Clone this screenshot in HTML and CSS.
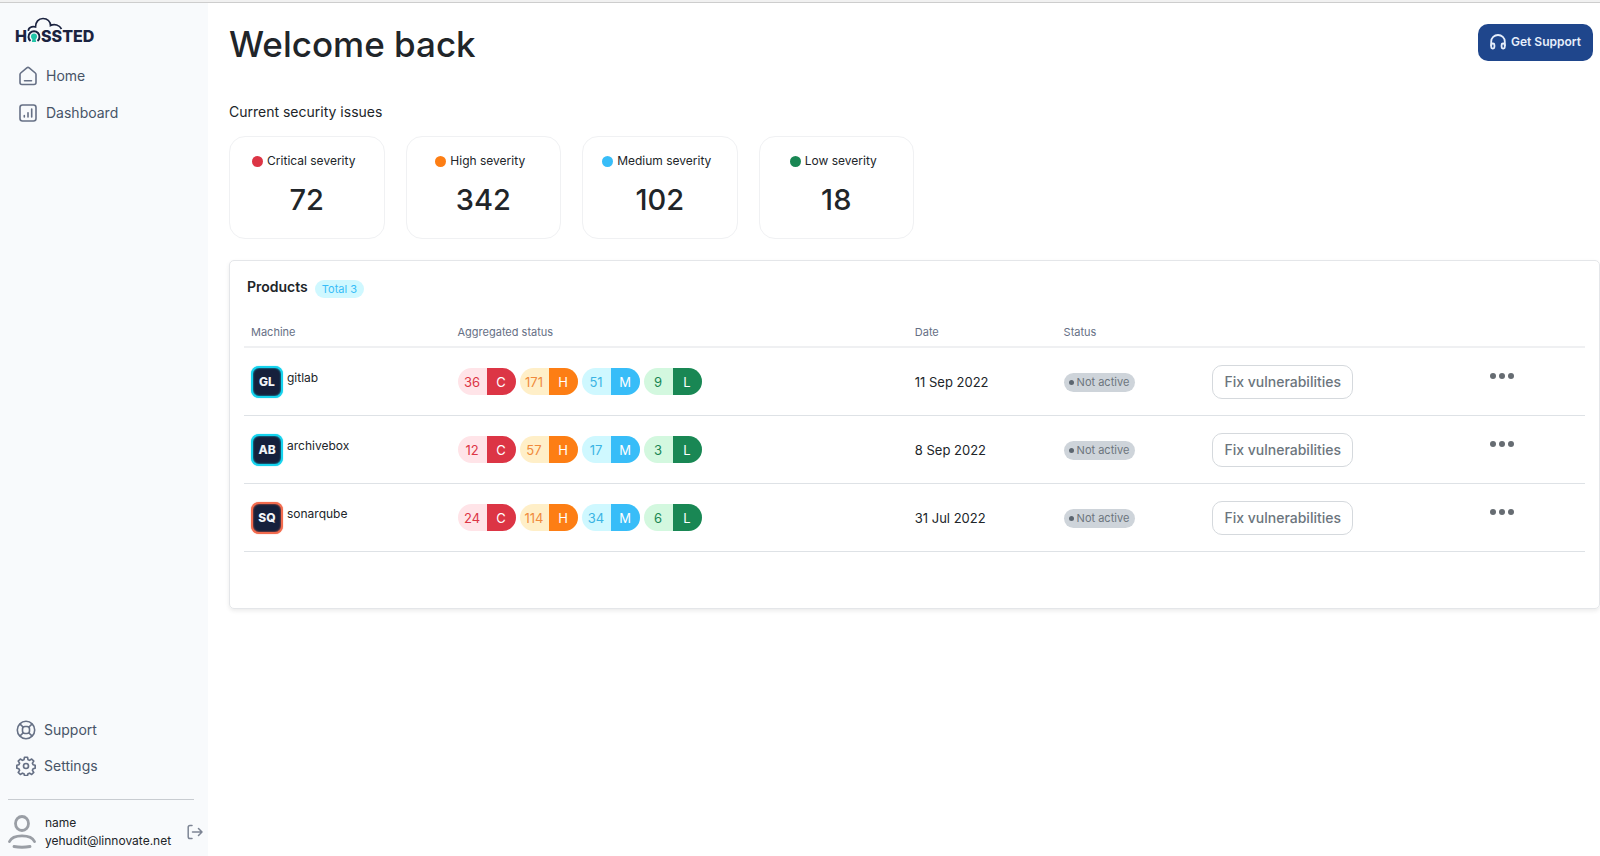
FILE: index.html
```html
<!DOCTYPE html>
<html lang="en">
<head>
<meta charset="utf-8">
<title>Hossted</title>
<link rel="stylesheet" href="styles.css">
</head>
<body>
<div class="app">
  <aside class="sidebar">
    <a class="logo" href="#" aria-label="Hossted">
      <svg width="90" height="34" viewBox="-2 0 90 34" fill="none">
        <path d="M12.500 16c-.5-3 3-5 7-4 0-5 3-8.500 7.500-8.500 4.500 0 7.500 3 7.500 7 4-2 9-.5 11 3.500" stroke="#1b2340" stroke-width="1.700"/>
        <text class="wordmark" x="-1" y="27">H</text>
        <path d="M14.500 26a5.500 5.500 0 1 1 7 0" stroke="#1b2340" stroke-width="2"/>
        <circle cx="18" cy="21.500" r="3" fill="#23c4a7"/>
        <path d="M16.500 23h3l.6 4h-4.200z" fill="#23c4a7"/>
        <text class="wordmark" x="25" y="27">SSTED</text>
      </svg>
    </a>
    <nav class="nav">
      <a class="nav-item" href="#">
        <svg width="20" height="20" viewBox="0 0 20 20" fill="none" stroke="#667085" stroke-width="1.600" stroke-linecap="round" stroke-linejoin="round"><path d="M2 8.500Q2 7.600 2.700 7L8.800 1.800Q10 1 11.200 1.800L17.300 7Q18 7.600 18 8.500V16.500Q18 18.500 16 18.500H4Q2 18.500 2 16.500ZM6.500 14.800H13.500"/></svg>
        <span>Home</span>
      </a>
      <a class="nav-item" href="#">
        <svg width="20" height="20" viewBox="0 0 20 20" fill="none" stroke="#667085" stroke-width="1.600" stroke-linecap="round" stroke-linejoin="round"><rect x="2" y="2" width="16" height="16" rx="2.500"/><path d="M6.300 12.500V14M10 9.800V14M13.700 6V14"/></svg>
        <span>Dashboard</span>
      </a>
    </nav>
    <nav class="nav nav-bottom">
      <a class="nav-item" href="#">
        <svg width="20" height="20" viewBox="0 0 20 20" fill="none" stroke="#667085" stroke-width="1.600"><circle cx="10" cy="10" r="8.700"/><rect x="6.500" y="6.500" width="7" height="7" rx="2.500"/><path d="M3.800 3.900l3.500 3.400M12.700 12.700l3.500 3.400M16.200 3.900l-3.500 3.400M7.300 12.700l-3.500 3.400"/></svg>
        <span>Support</span>
      </a>
      <a class="nav-item" href="#">
        <svg width="20" height="20" viewBox="0 0 24 24" fill="none" stroke="#667085" stroke-width="2" stroke-linejoin="round"><circle cx="12" cy="12" r="3"/><path d="M10.200 1.500h3.600l.6 2.900 1.900.8 2.500-1.600 2.500 2.500-1.600 2.500.8 1.900 2.500.6v3.600l-2.500.6-.8 1.900 1.600 2.500-2.500 2.500-2.500-1.600-1.900.8-.6 2.100h-3.600l-.6-2.100-1.900-.8-2.500 1.600-2.500-2.500 1.600-2.500-.8-1.900-2.500-.6v-3.600l2.500-.6.800-1.900-1.600-2.500 2.500-2.500 2.500 1.600 1.900-.8z"/></svg>
        <span>Settings</span>
      </a>
    </nav>
    <div class="account">
      <svg width="28" height="34" viewBox="0 0 28 34" fill="none" stroke="#9a9ea5" stroke-width="2.800" stroke-linecap="round"><ellipse cx="14" cy="8.500" rx="6.500" ry="7"/><path d="M1.500 26.500C5 19 23 19 26.500 26.500"/><path d="M6 31.500Q14 33 22 31.500"/></svg>
      <div class="account-text">
        <span>name</span>
        <span>yehudit@linnovate.net</span>
      </div>
      <button class="logout" type="button" aria-label="Log out">
        <svg width="16" height="16" viewBox="0 0 16 16" fill="none" stroke="#7d8594" stroke-width="1.500" stroke-linecap="round" stroke-linejoin="round"><path d="M5 1.500H3Q1.200 1.500 1.200 3.300V12.700Q1.200 14.500 3 14.500H5M5.500 8H15M11.500 4.500L15 8l-3.500 3.500"/></svg>
      </button>
    </div>
  </aside>
  <main class="main">
    <header class="page-head">
      <h1>Welcome back</h1>
      <button class="support" type="button">
        <svg width="16" height="16" viewBox="0 0 16 16" fill="none" stroke="currentColor" stroke-width="1.800" stroke-linejoin="round"><path d="M1.200 12V7.500a6.800 6.500 0 0 1 13.600 0V12"/><rect x="1.200" y="9.500" width="3.200" height="5" rx="1.400"/><rect x="11.600" y="9.500" width="3.200" height="5" rx="1.400"/></svg>
        <span>Get Support</span>
      </button>
    </header>
    <h2 class="section-title">Current security issues</h2>
    <section class="stats">
      <article class="stat"><p class="stat-label"><i class="dot red"></i>Critical severity</p><p class="stat-value">72</p></article>
      <article class="stat"><p class="stat-label"><i class="dot orange"></i>High severity</p><p class="stat-value">342</p></article>
      <article class="stat"><p class="stat-label"><i class="dot blue"></i>Medium severity</p><p class="stat-value">102</p></article>
      <article class="stat"><p class="stat-label"><i class="dot green"></i>Low severity</p><p class="stat-value">18</p></article>
    </section>
    <section class="products">
      <div class="products-head"><h3>Products</h3><span class="total">Total 3</span></div>
      <table class="table">
        <colgroup><col class="c-machine"><col class="c-agg"><col class="c-date"><col class="c-status"><col class="c-fix"><col></colgroup>
        <thead>
          <tr><th>Machine</th><th>Aggregated status</th><th>Date</th><th>Status</th><th></th><th></th></tr>
        </thead>
        <tbody>
          <tr>
            <td><div class="machine"><span class="avatar">GL</span><span>gitlab</span></div></td>
            <td><div class="pills"><span class="pill p-red"><b>36</b><b>C</b></span><span class="pill p-orange"><b>171</b><b>H</b></span><span class="pill p-blue"><b>51</b><b>M</b></span><span class="pill p-green"><b>9</b><b>L</b></span></div></td>
            <td>11 Sep 2022</td>
            <td><span class="status">Not active</span></td>
            <td><button class="fix" type="button">Fix vulnerabilities</button></td>
            <td><button class="more" type="button" aria-label="More"><i></i><i></i><i></i></button></td>
          </tr>
          <tr>
            <td><div class="machine"><span class="avatar">AB</span><span>archivebox</span></div></td>
            <td><div class="pills"><span class="pill p-red"><b>12</b><b>C</b></span><span class="pill p-orange"><b>57</b><b>H</b></span><span class="pill p-blue"><b>17</b><b>M</b></span><span class="pill p-green"><b>3</b><b>L</b></span></div></td>
            <td>8 Sep 2022</td>
            <td><span class="status">Not active</span></td>
            <td><button class="fix" type="button">Fix vulnerabilities</button></td>
            <td><button class="more" type="button" aria-label="More"><i></i><i></i><i></i></button></td>
          </tr>
          <tr>
            <td><div class="machine"><span class="avatar warm">SQ</span><span>sonarqube</span></div></td>
            <td><div class="pills"><span class="pill p-red"><b>24</b><b>C</b></span><span class="pill p-orange"><b>114</b><b>H</b></span><span class="pill p-blue"><b>34</b><b>M</b></span><span class="pill p-green"><b>6</b><b>L</b></span></div></td>
            <td>31 Jul 2022</td>
            <td><span class="status">Not active</span></td>
            <td><button class="fix" type="button">Fix vulnerabilities</button></td>
            <td><button class="more" type="button" aria-label="More"><i></i><i></i><i></i></button></td>
          </tr>
        </tbody>
      </table>
    </section>
  </main>
</div>
</body>
</html>
```
FILE: styles.css
```css
* { box-sizing: border-box; }
body { margin: 0; font-family: Inter, "Liberation Sans", sans-serif; font-size: 14px; line-height: 20px; color: #212529; background: #fff; border-top: 2px solid #f1f1f1; }
h1, h2, h3, p { margin: 0; font-weight: 400; }
button { font: inherit; cursor: pointer; }
svg { flex: none; display: block; }

.app { display: flex; min-height: calc(100vh - 2px); border-top: 1px solid #cdcdcd; }
.sidebar { flex: none; width: 208px; display: flex; flex-direction: column; background: #f8fafc; padding: 12px 0 6px; }
.logo { margin-left: 14px; }
.wordmark { font-family: Inter, sans-serif; font-size: 16px; font-weight: 800; fill: #1b2340; }
.nav { display: flex; flex-direction: column; gap: 17px; padding: 17px 0 0 18px; }
.nav-item { display: flex; align-items: center; gap: 8px; color: #475467; font-size: 14px; text-decoration: none; }
.nav-bottom { margin-top: auto; gap: 16px; padding: 0 0 23px 16px; }
.account { display: flex; align-items: center; gap: 9px; margin-left: 8px; padding-top: 15px; position: relative; font-size: 12px; line-height: 18px; }
.account::before { content: ""; position: absolute; top: 0; left: 0; right: 14px; border-top: 1px solid #c8ccd1; }
.account-text { display: flex; flex-direction: column; }
.logout { border: 0; background: none; padding: 0; margin-left: auto; margin-right: 5px; }

.main { flex: 1; min-width: 0; padding: 17px 0 0 21px; }
.page-head { display: flex; justify-content: space-between; align-items: flex-start; padding-right: 7px; }
h1 { font-size: 35px; line-height: 48px; font-weight: 500; }
.support { display: flex; align-items: center; gap: 5px; height: 37px; margin-top: 4px; padding: 0 12px 2px; border: 0; border-radius: 10px; background: #1f468c; color: #e6eefb; font-size: 12px; font-weight: 600; }
.section-title { margin-top: 34px; font-size: 14px; line-height: 20px; }
.stats { display: grid; grid-template-columns: repeat(4, 1fr); gap: 21px; max-width: 685px; margin-top: 14px; }
.stat { height: 103px; border: 1px solid #f0f1f3; border-radius: 16px; padding-top: 15px; text-align: center; }
.stat-label { display: flex; justify-content: center; align-items: center; gap: 4px; padding-right: 6px; font-size: 12px; line-height: 18px; }
.dot { width: 11px; height: 11px; border-radius: 50%; }
.red { background: #dc3545; }
.orange { background: #fd7e14; }
.blue { background: #38bdf8; }
.green { background: #198754; }
.stat-value { margin-top: 12px; font-size: 29px; line-height: 36px; font-weight: 500; }

.products { margin-top: 21px; padding: 15px 14px 56px; border: 1px solid #e4e6e9; border-radius: 5px; box-shadow: 0 2px 4px rgba(0, 0, 0, .08); }
.products-head { display: flex; align-items: center; gap: 7px; padding-left: 3px; }
h3 { font-size: 14px; line-height: 22px; font-weight: 600; }
.total { margin-top: 3px; padding: 0 7px; border-radius: 9px; background: #cff8ff; color: #38bdf8; font-size: 11px; line-height: 18px; font-weight: 400; }
.table { width: 100%; border-collapse: separate; border-spacing: 0; table-layout: fixed; margin-top: 18px; font-size: 13px; }
.c-machine { width: 15.400%; }
.c-agg { width: 34.100%; }
.c-date, .c-status { width: 11.100%; }
.c-fix { width: 20.700%; }
th { height: 32px; padding: 2px 7px 0; text-align: left; font-size: 11px; line-height: 16px; font-weight: 400; color: #667085; border-bottom: 2px solid #eff0f2; }
td { height: 68px; padding: 0 7px; border-bottom: 1px solid #dee2e6; }
.machine { display: flex; gap: 4px; font-size: 12px; }
.avatar { width: 32px; height: 32px; border-radius: 8px; border: 2px solid #16d3ee; box-shadow: inset 0 0 2px #16d3ee, 0 0 1px #16d3ee; background: #16203c; color: #f2f4f8; font-size: 12px; line-height: 28px; font-weight: 800; text-align: center; }
.machine span + span { line-height: 24px; }
.avatar.warm { border-color: #f26b4e; box-shadow: inset 0 0 2px #f26b4e, 0 0 1px #f26b4e; }
.pills { display: flex; gap: 4px; }
.pill { display: flex; width: 58px; height: 27px; border-radius: 14px; overflow: hidden; }
.pill b { flex: 1 1 0; min-width: 0; font-weight: 400; line-height: 28px; text-align: center; }
.pill b + b { color: #fff; }
.p-red { background: #ffe4e8; color: #dc3545; }
.p-red b + b { background: #dc3545; }
.p-orange { background: #ffefc8; color: #f08a3c; }
.p-orange b + b { background: #fd7e14; }
.p-blue { background: #cff8ff; color: #3bb4e4; }
.p-blue b + b { background: #38bdf8; }
.p-green { background: #d3f8df; color: #198754; }
.p-green b + b { background: #198754; }
.status { display: inline-flex; vertical-align: middle; align-items: center; gap: 3px; height: 19px; padding: 0 6px 0 5px; border-radius: 10px; background: #ced4da; color: #6c757d; font-size: 11px; font-weight: 400; }
.status::before { content: ""; width: 5px; height: 5px; border-radius: 50%; background: #5c6670; }
.fix { height: 34px; padding: 0 11px; border: 1px solid #d5d9dd; border-radius: 10px; background: #fff; color: #6c757d; font-size: 14px; font-weight: 500; white-space: nowrap; }
.more { display: flex; gap: 3px; padding: 0 0 12px; border: 0; background: none; }
.more i { width: 6px; height: 6px; border-radius: 50%; background: #666c72; }
```
